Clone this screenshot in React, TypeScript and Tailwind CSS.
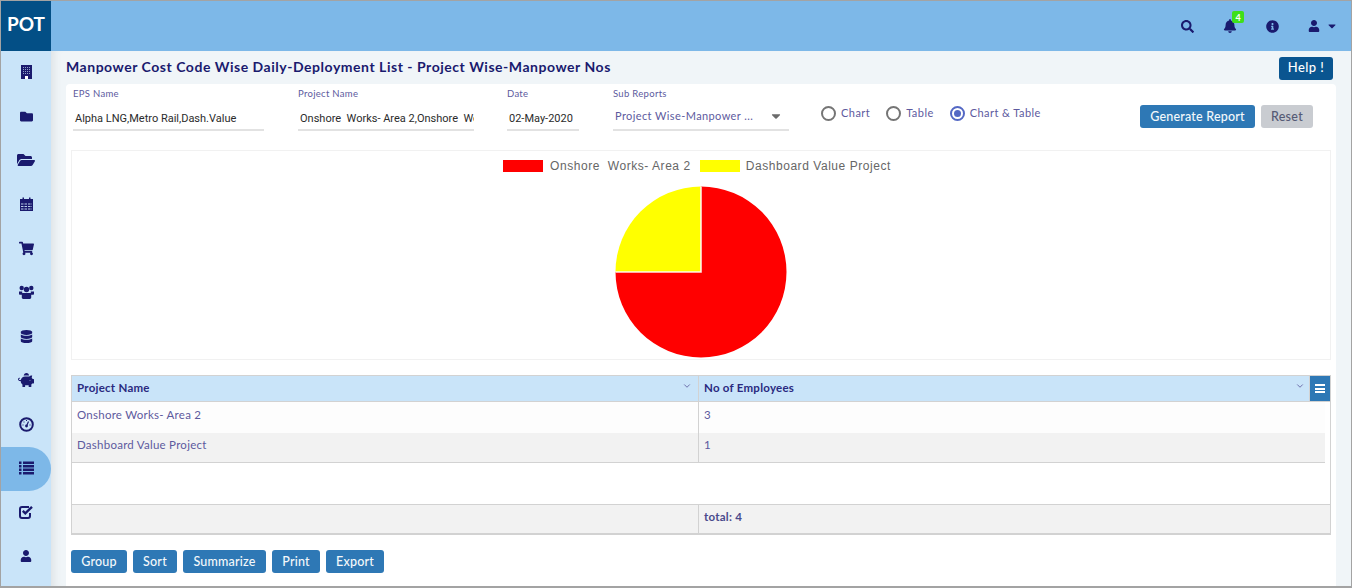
import React from 'react';
import {
  FaBell,
  FaCaretDown,
  FaDatabase,
  FaFolder,
  FaFolderOpen,
  FaInfoCircle,
  FaPiggyBank,
  FaSearch,
  FaShoppingCart,
  FaUser,
} from 'react-icons/fa';
import { FiChevronDown } from 'react-icons/fi';

const BuildingIcon = () => (
  <svg width="11" height="14" viewBox="0 0 11 14">
    <rect width="11" height="14" fill="currentColor" />
    <path d="M2 2.5h7M2 4.5h7M2 6.5h7M2 8.5h7" stroke="#8fa0c8" strokeWidth="1" strokeDasharray="1 1" />
    <rect x="4" y="11" width="3" height="3" fill="#ffffff" />
  </svg>
);

const CalendarIcon = () => (
  <svg width="13" height="14" viewBox="0 0 13 14">
    <path d="M0 2h2.5V0.5h1.5V2h5V0.5h1.5V2H13v3H0z" fill="currentColor" />
    <rect y="5" width="13" height="9" fill="currentColor" />
    <path d="M1 7h11M1 9.5h11M1 12h11" stroke="#b9cfe8" strokeWidth="1" strokeDasharray="2.5 1" />
  </svg>
);

const UsersIcon = () => (
  <svg width="15" height="14" viewBox="0 0 15 14" fill="currentColor">
    <circle cx="2.7" cy="3" r="2.2" />
    <circle cx="12.3" cy="3" r="2.2" />
    <circle cx="7.5" cy="4.5" r="2.7" />
    <path d="M0 6.5h3.2v3.3H0.8C0.3 9.8 0 9.4 0 9zM15 6.5h-3.2v3.3h2.4c.5 0 .8-.4.8-.8z" />
    <path d="M3.8 8h7.4c.6 0 1 .5 1 1v3.6c0 .8-.6 1.4-1.4 1.4H4.2c-.8 0-1.4-.6-1.4-1.4V9c0-.5.4-1 1-1z" />
  </svg>
);

const GaugeIcon = () => (
  <svg width="15" height="15" viewBox="0 0 15 15" fill="none">
    <circle cx="7.5" cy="7.5" r="6.3" stroke="currentColor" strokeWidth="2" />
    <path d="M7.5 9L9.5 4.5" stroke="currentColor" strokeWidth="1.2" />
    <circle cx="7.5" cy="9" r="1.4" fill="currentColor" />
    <path d="M3.5 8h1M4.5 5h1M7 3.5h1M10.5 8h1" stroke="currentColor" strokeWidth="1" />
  </svg>
);

const ListIcon = () => (
  <svg width="15" height="14" viewBox="0 0 15 14" fill="currentColor">
    <path d="M0 0.5h2.5V3H0zM0 4h2.5v2.5H0zM0 7.5h2.5V10H0zM0 11h2.5v2.5H0z" />
    <path d="M4 0.5h11V3H4zM4 4h11v2.5H4zM4 7.5h11V10H4zM4 11h11v2.5H4z" />
  </svg>
);

const CheckIcon = () => (
  <svg width="15" height="14" viewBox="0 0 15 14" fill="none">
    <path d="M11 8v3a2 2 0 0 1-2 2H3a2 2 0 0 1-2-2V4a2 2 0 0 1 2-2h7" stroke="currentColor" strokeWidth="2" />
    <path d="M3.8 5.8L6.3 8.3L13 1.8" stroke="currentColor" strokeWidth="2.4" />
  </svg>
);

const navItems: { icon: React.ReactNode; active?: boolean }[] = [
  { icon: <BuildingIcon /> },
  { icon: <FaFolder size={13} /> },
  { icon: <FaFolderOpen size={18} /> },
  { icon: <CalendarIcon /> },
  { icon: <FaShoppingCart size={15} /> },
  { icon: <UsersIcon /> },
  { icon: <FaDatabase size={13} /> },
  { icon: <FaPiggyBank size={16} /> },
  { icon: <GaugeIcon /> },
  { icon: <ListIcon />, active: true },
  { icon: <CheckIcon /> },
  { icon: <FaUser size={12} /> },
];

const Field = ({ label, value, className }: { label: string; value: string; className: string }) => (
  <div className={className}>
    <div className="h-[20px] text-[9.5px] leading-[20px] tracking-[0.3px] text-[#5d5a9e]">{label}</div>
    <div className="h-[27px] overflow-hidden whitespace-pre border-b-2 border-[#e2e2e2] pl-[2px] pt-[6px] font-['Roboto',sans-serif] text-[11px] leading-[18px] text-[#2b2b2b]">
      {value}
    </div>
  </div>
);

const Radio = ({ label, checked }: { label: string; checked?: boolean }) => (
  <div className="flex items-center gap-[5px]">
    <span
      className={`flex h-[15px] w-[15px] items-center justify-center rounded-full border-2 ${
        checked ? 'border-[#5468c4]' : 'border-[#757575]'
      }`}
    >
      {checked && <span className="h-[7px] w-[7px] rounded-full bg-[#5468c4]" />}
    </span>
    <span className="text-[11px] tracking-[0.45px] text-[#5d5a9e]">{label}</span>
  </div>
);

const Btn = ({ children, width }: { children: React.ReactNode; width: string }) => (
  <button className={`h-[23px] rounded-[3px] bg-[#2e78b5] pt-[1px] text-[12.5px] font-medium tracking-[0.2px] text-[#f4f8fb] ${width}`}>
    {children}
  </button>
);

export default function App() {
  return (
    <div className="flex h-[588px] w-[1352px] flex-col overflow-hidden border border-b-2 border-[#a3a3a3] font-['Lato',sans-serif]">
      {/* Top bar */}
      <div className="flex h-[50px] shrink-0 items-center bg-[#7db8e8]">
        <div className="flex h-[50px] w-[50px] items-center justify-center bg-[#034f86] pb-[3px] text-[19px] font-bold text-white">
          POT
        </div>
        <div className="ml-auto flex items-center text-[#1a1a6e]">
          <FaSearch size={13} className="mr-[29px]" />
          <div className="relative mr-[29px]">
            <FaBell size={14} />
            <span className="absolute left-[9px] top-[-8px] flex h-[12px] w-[12px] items-center justify-center rounded-[2px] bg-[#3ee01a] text-[9px] font-bold leading-none text-white">
              4
            </span>
          </div>
          <FaInfoCircle size={13} className="mr-[29px]" />
          <FaUser size={12} className="mr-[6px]" />
          <FaCaretDown size={12} className="mr-[13px]" />
        </div>
      </div>

      <div className="flex min-h-0 flex-1">
        {/* Sidebar */}
        <div className="flex w-[50px] shrink-0 flex-col bg-[#c9e4f9] text-[#1a1a6e]">
          {navItems.map((item, i) => (
            <div
              key={i}
              className={`flex h-[44px] shrink-0 items-center justify-center pb-[2px] ${
                item.active ? 'rounded-r-[22px] bg-[#7db8e8]' : ''
              }`}
            >
              {item.icon}
            </div>
          ))}
        </div>

        {/* Content */}
        <div className="min-w-0 flex-1 bg-[#f0f5f8] px-[15px] shadow-[inset_9px_0_8px_-6px_rgba(0,0,0,0.08)]">
          <div className="flex h-[33px] items-center justify-between">
            <h1 className="mt-[-2px] text-[14px] font-bold tracking-[0.53px] text-[#1a1a6e]">
              Manpower Cost Code Wise Daily-Deployment List - Project Wise-Manpower Nos
            </h1>
            <button className="mr-[3px] mt-[1px] h-[23px] w-[54px] rounded-[3px] bg-[#0a5590] text-[13px] font-medium tracking-[0.4px] text-white">
              Help !
            </button>
          </div>

          <div className="h-[504px] rounded-t-[4px] bg-white px-[5px]">
            {/* Filters */}
            <div className="flex h-[66px] items-start">
              <Field label="EPS Name" value="Alpha LNG,Metro Rail,Dash.Value" className="ml-[2px] w-[191px]" />
              <Field label="Project Name" value="Onshore  Works- Area 2,Onshore  Works" className="ml-[34px] w-[176px]" />
              <Field label="Date" value="02-May-2020" className="ml-[33px] w-[72px]" />
              <div className="ml-[34px] w-[176px]">
                <div className="h-[20px] text-[9.5px] leading-[20px] tracking-[0.3px] text-[#5d5a9e]">Sub Reports</div>
                <div className="flex h-[27px] items-center justify-between border-b-2 border-[#e2e2e2] pb-[1px] pl-[2px] pr-[6px] text-[11px] tracking-[0.4px] text-[#5d5a9e]">
                  <span>Project Wise-Manpower ...</span>
                  <FaCaretDown size={14} className="text-[#6b6b6b]" />
                </div>
              </div>
              <div className="ml-[32px] mt-[21px] flex gap-[16px]">
                <Radio label="Chart" />
                <Radio label="Table" />
                <Radio label="Chart & Table" checked />
              </div>
              <div className="ml-auto mr-[18px] mt-[21px] flex gap-[6px]">
                <button className="h-[23px] w-[115px] rounded-[3px] bg-[#2e78b5] pt-[1px] text-[12.5px] font-medium tracking-[0.2px] text-[#f4f8fb]">
                  Generate Report
                </button>
                <button className="h-[23px] w-[52px] rounded-[3px] bg-[#c9ccd1] pt-[1px] text-[12.5px] font-medium tracking-[0.3px] text-[#555a75]">
                  Reset
                </button>
              </div>
            </div>

            {/* Chart */}
            <div className="flex h-[210px] flex-col items-center border border-[#f1f1f1]">
              <div className="mr-[8px] flex h-[30px] shrink-0 items-center font-['Liberation_Sans',sans-serif] text-[12px] tracking-[0.55px] text-[#666666]">
                <span className="h-[12px] w-[40px] bg-[#ff0000]" />
                <span className="ml-[7px] whitespace-pre">Onshore  Works- Area 2</span>
                <span className="ml-[9px] h-[12px] w-[40px] bg-[#ffff00]" />
                <span className="ml-[6px]">Dashboard Value Project</span>
              </div>
              <svg width="174" height="174" viewBox="0 0 174 174" className="mt-[4px]">
                <path d="M87 87 L87 1.5 A85.5 85.5 0 1 1 1.5 87 Z" fill="#ff0000" />
                <path d="M87 87 L1.5 87 A85.5 85.5 0 0 1 87 1.5 Z" fill="#ffff00" />
                <path d="M87 1.5 L87 87 L1.5 87" fill="none" stroke="#ffffff" strokeWidth="1.6" strokeOpacity="0.9" />
              </svg>
            </div>

            {/* Table */}
            <div className="mt-[15px] h-[160px] border border-b-2 border-[#d2d2d2] text-[11.5px] tracking-[0.25px]">
              <div className="flex h-[26px] border-b border-[#d2d2d2] bg-[#c9e4f9] font-bold text-[#2a2a80]">
                <div className="relative flex w-[627px] items-center border-r border-[#d2d2d2] pb-[2px] pl-[5px]">
                  Project Name
                  <FiChevronDown size={10} className="absolute right-[6px] top-[5px] text-[#5d5a9e]" />
                </div>
                <div className="relative flex flex-1 items-center pb-[2px] pl-[5px]">
                  No of Employees
                  <FiChevronDown size={10} className="absolute right-[25px] top-[5px] text-[#5d5a9e]" />
                  <div className="absolute bottom-0 right-0 top-0 flex w-[21px] flex-col items-center justify-center gap-[1.5px] border-l border-[#d2d2d2] bg-[#2e78b5]">
                    <span className="h-[2px] w-[10px] bg-white" />
                    <span className="h-[2px] w-[10px] bg-white" />
                    <span className="h-[2px] w-[10px] bg-white" />
                  </div>
                </div>
              </div>
              <div className="mr-[5px] text-[#5d5a9e]">
                <div className="flex h-[31px] bg-[#fdfdfd]">
                  <div className="w-[627px] border-r border-[#d2d2d2] pl-[5px] pt-[4px]">Onshore Works- Area 2</div>
                  <div className="pl-[5px] pt-[4px]">3</div>
                </div>
                <div className="flex h-[30px] border-b border-[#d2d2d2] bg-[#f2f2f2]">
                  <div className="w-[627px] border-r border-[#d2d2d2] pl-[5px] pt-[3px]">Dashboard Value Project</div>
                  <div className="pl-[5px] pt-[3px]">1</div>
                </div>
              </div>
              <div className="h-[41px] bg-white" />
              <div className="flex h-[29px] border-t border-[#d2d2d2] bg-[#f2f2f2] font-bold text-[#4a4a8c]">
                <div className="h-full w-[627px] border-r border-[#d2d2d2]" />
                <div className="pl-[5px] pt-[3px]">total: 4</div>
              </div>
            </div>

            <div className="mt-[15px] flex gap-[6px]">
              <Btn width="w-[56px]">Group</Btn>
              <Btn width="w-[44px]">Sort</Btn>
              <Btn width="w-[83px]">Summarize</Btn>
              <Btn width="w-[48px]">Print</Btn>
              <Btn width="w-[58px]">Export</Btn>
            </div>
          </div>
        </div>
      </div>
    </div>
  );
}
